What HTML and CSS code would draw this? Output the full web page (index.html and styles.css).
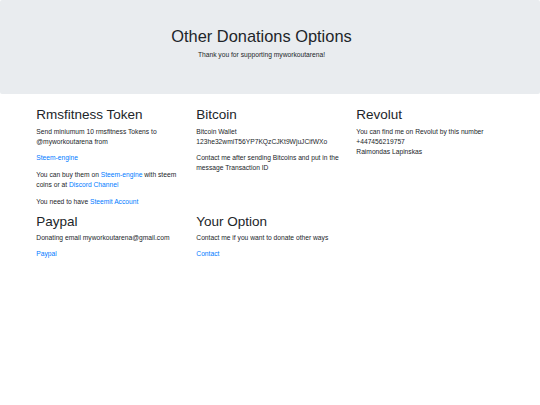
FILE: index.html
```html
<!DOCTYPE html>
<html lang="en">
<head>
    <meta charset="UTF-8">
    <meta name="viewport" content="width=device-width, initial-scale=1.0">
    <title>Other Donations Options</title>
    <link rel="stylesheet" href="styles.css">
</head>
<body>
    <!-- Header -->
    <div class="jumbotron">
        <h1>Other Donations Options</h1>
        <p>Thank you for supporting myworkoutarena!</p>
    </div>

    <div class="container">
        <div class="row">
            <div class="col">
                <h2>Rmsfitness Token</h2>
                <p>Send miniumum 10 rmsfitness Tokens to @myworkoutarena from</p>
                <p><a href="#">Steem-engine</a></p>
                <p>You can buy them on <a href="#">Steem-engine</a> with steem coins or at <a href="#">Discord Channel</a></p>
                <p>You need to have <a href="#">Steemit Account</a></p>
            </div>
            <div class="col">
                <h2>Bitcoin</h2>
                <p>Bitcoin Wallet<br>123he32wmiT56YP7KQzCJKt9WjuJCifWXo</p>
                <p>Contact me after sending Bitcoins and put in the message Transaction ID</p>
            </div>
            <div class="col">
                <h2>Revolut</h2>
                <p>You can find me on Revolut by this number<br>+447456219757<br>Raimondas Lapinskas</p>
            </div>
        </div>

        <div class="row">
            <div class="col">
                <h2>Paypal</h2>
                <p>Donating email myworkoutarena@gmail.com</p>
                <p><a href="#">Paypal</a></p>
            </div>
            <div class="col">
                <h2>Your Option</h2>
                <p>Contact me if you want to donate other ways</p>
                <p><a href="#">Contact</a></p>
            </div>
        </div>
    </div>
</body>
</html>
```

FILE: styles.css
```css
body {
    font-family: "Liberation Sans", Arial, sans-serif;
    font-size: 6.7px;
    line-height: 1.5;
    color: #212529;
    background-color: #fff;
    margin: 0;
    padding: 0;
}
h1, h2 {
    font-weight: 400;
    line-height: 1.2;
    margin-top: 0;
}
p {
    margin: 0 0 6.7px;
}
a {
    color: #007bff;
    text-decoration: none;
}
.jumbotron {
    background-color: #e9ecef;
    padding: 27px 30px 27px 13px;
    margin-bottom: 13.5px;
    border-radius: 2px;
    text-align: center;
}
.jumbotron h1 {
    font-size: 16.4px;
    margin-bottom: 3.4px;
}
.container {
    width: 480px;
    margin: 0 auto;
}
.row {
    display: flex;
}
.col {
    flex: 0 0 160px;
    box-sizing: border-box;
    padding: 0 6.3px;
}
.col h2 {
    font-size: 13.5px;
    margin-bottom: 3px;
}
```
